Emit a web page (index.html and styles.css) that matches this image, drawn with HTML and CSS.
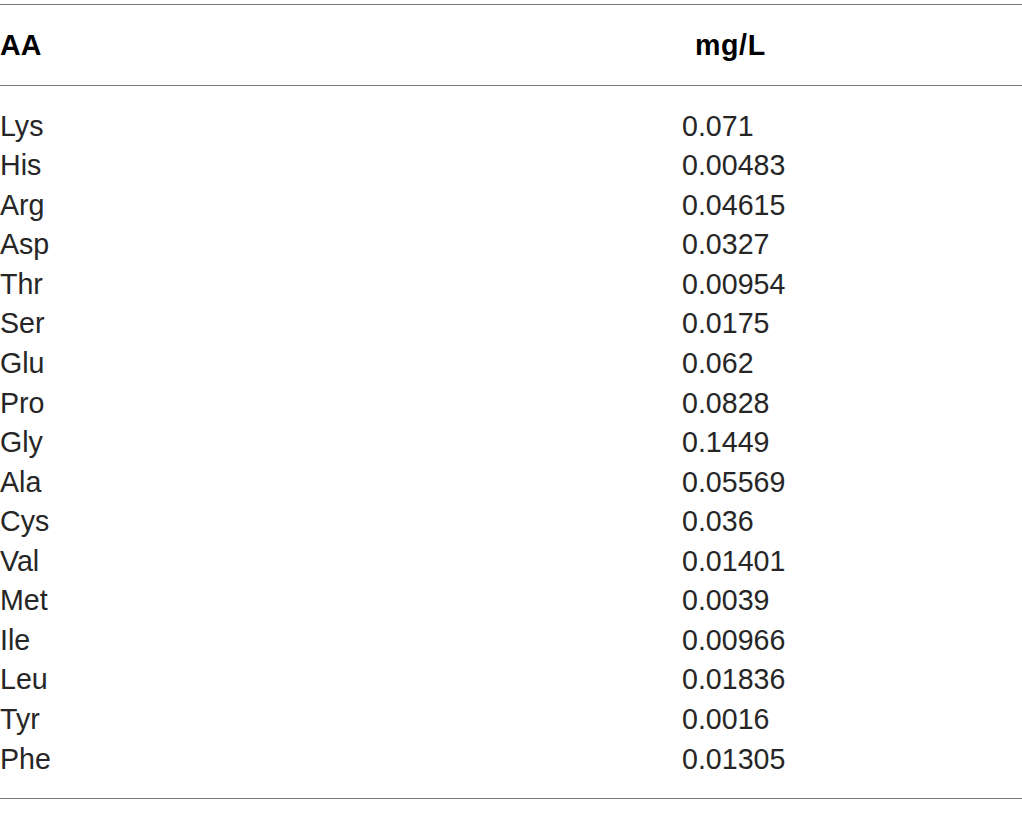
FILE: index.html
```html
<!DOCTYPE html>
<html lang="en">
<head>
<meta charset="utf-8">
<title>Amino acids</title>
<link rel="stylesheet" href="styles.css">
</head>
<body>
<div class="table">
  <div class="row head">
    <div class="c1">AA</div>
    <div class="c2">mg/L</div>
  </div>
  <div class="body">
    <div class="row"><div class="c1">Lys</div><div class="c2">0.071</div></div>
    <div class="row"><div class="c1">His</div><div class="c2">0.00483</div></div>
    <div class="row"><div class="c1">Arg</div><div class="c2">0.04615</div></div>
    <div class="row"><div class="c1">Asp</div><div class="c2">0.0327</div></div>
    <div class="row"><div class="c1">Thr</div><div class="c2">0.00954</div></div>
    <div class="row"><div class="c1">Ser</div><div class="c2">0.0175</div></div>
    <div class="row"><div class="c1">Glu</div><div class="c2">0.062</div></div>
    <div class="row"><div class="c1">Pro</div><div class="c2">0.0828</div></div>
    <div class="row"><div class="c1">Gly</div><div class="c2">0.1449</div></div>
    <div class="row"><div class="c1">Ala</div><div class="c2">0.05569</div></div>
    <div class="row"><div class="c1">Cys</div><div class="c2">0.036</div></div>
    <div class="row"><div class="c1">Val</div><div class="c2">0.01401</div></div>
    <div class="row"><div class="c1">Met</div><div class="c2">0.0039</div></div>
    <div class="row"><div class="c1">Ile</div><div class="c2">0.00966</div></div>
    <div class="row"><div class="c1">Leu</div><div class="c2">0.01836</div></div>
    <div class="row"><div class="c1">Tyr</div><div class="c2">0.0016</div></div>
    <div class="row"><div class="c1">Phe</div><div class="c2">0.01305</div></div>
  </div>
</div>
</body>
</html>
```
FILE: styles.css
```css
html, body {
  margin: 0;
  padding: 0;
  background: #fff;
}
body {
  padding-top: 4px;
  font-family: "Liberation Sans", Arial, sans-serif;
  font-size: 28.6px;
  color: #262626;
}
.table {
  border-top: 1px solid #7a7a7a;
  border-bottom: 1px solid #7a7a7a;
}
.row {
  display: grid;
  grid-template-columns: 682px 1fr;
  line-height: 39.56px;
}
.head {
  padding: 21px 0 19px;
  font-weight: bold;
  color: #000;
  border-bottom: 1px solid #7a7a7a;
}
.head .c2 {
  padding-left: 13px;
  letter-spacing: 0.6px;
}
.body {
  padding: 21px 0 19px;
}
```
